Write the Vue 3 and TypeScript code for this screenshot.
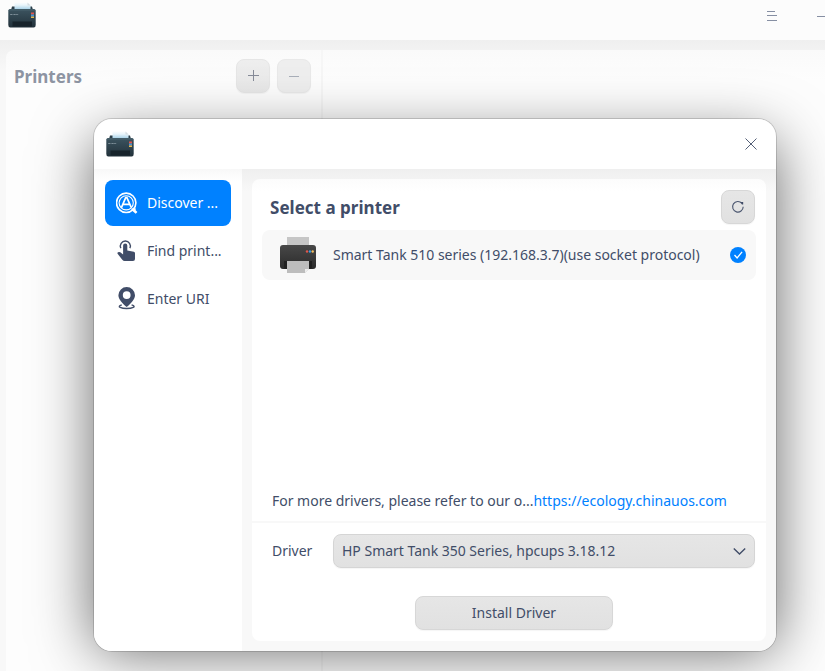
<script setup lang="ts">
import { ref } from 'vue'

interface NavItem { id: string; label: string }

const navItems: NavItem[] = [
  { id: 'discover', label: 'Discover ...' },
  { id: 'find', label: 'Find print...' },
  { id: 'uri', label: 'Enter URI' },
]
const active = ref('discover')
const driver = ref('HP Smart Tank 350 Series, hpcups 3.18.12')
</script>

<template>
  <div class="window">
    <svg width="0" height="0" class="defs">
      <defs>
        <linearGradient id="body" x1="0" y1="0" x2="0" y2="1">
          <stop offset="0" stop-color="#3c5460" /><stop offset="1" stop-color="#22313a" />
        </linearGradient>
        <linearGradient id="paper" x1="0" y1="0" x2="0" y2="1">
          <stop offset="0" stop-color="#fafcfd" /><stop offset="0.35" stop-color="#e9f5fb" /><stop offset="1" stop-color="#9ccbe4" />
        </linearGradient>
        <linearGradient id="device" x1="0" y1="0" x2="0" y2="1">
          <stop offset="0" stop-color="#484848" /><stop offset="1" stop-color="#2b2b2b" />
        </linearGradient>
        <symbol id="app-logo" viewBox="0 0 28 26">
          <path d="M4 4.500h20l1 3.500H3z" fill="#2b3e49" />
          <path d="M6.500 0.500h14l2 2.500V8h-16z" fill="url(#paper)" />
          <path d="M19.500 0.500l3 3h-3z" fill="#d5dce0" />
          <path d="M2 7h24q1.500 0 1.700 1.500V23q0 2.500-2 2.500H2.300q-2 0-2-2.500V8.500Q.5 7 2 7z" fill="url(#body)" />
          <path d="M1 8h26" stroke="#526a76" stroke-width="0.700" />
          <path d="M4.500 19.500h19.500v5h-19.500z" fill="#17232b" />
          <path d="M2.200 12.500h8" stroke="#90a0a9" stroke-width="0.800" stroke-dasharray="2 .4 .8 .3" />
          <path d="M23 10.500h3v2h-3z" fill="#e2544a" />
          <path d="M23 12.500h3v2h-3z" fill="#4595d8" />
          <path d="M23 14.500h3v1.500h-3z" fill="#e8b94d" />
        </symbol>
      </defs>
    </svg>

    <header class="titlebar">
      <svg class="logo" width="28" height="26"><use href="#app-logo" /></svg>
      <svg class="menu-icon" width="10" height="11" viewBox="0 0 10 11"><path d="M0 .5h8M0 4.500h10M0 9.500h10" stroke="#868fa3" /></svg>
      <svg class="minimize-icon" width="8" height="1" viewBox="0 0 8 1"><path d="M0 .5h8" stroke="#868fa3" /></svg>
    </header>

    <main class="workspace">
      <aside class="printers">
        <h1>Printers</h1>
        <button class="square faded" aria-label="Add">
          <svg width="12" height="12" viewBox="0 0 12 12"><path d="M1 5.500h11M6.500 0v11" stroke="#868b98" /></svg>
        </button>
        <button class="square faded disabled" aria-label="Remove">
          <svg width="10" height="2" viewBox="0 0 10 2"><path d="M0 1.500h10" stroke="#a9afb9" /></svg>
        </button>
      </aside>
      <section class="detail"></section>
    </main>

    <div class="dialog" role="dialog">
      <div class="dialog-head">
        <svg class="logo" width="28" height="26"><use href="#app-logo" /></svg>
        <svg width="13" height="12" viewBox="0 0 13 12"><path d="M.5.500l11 11M11.500.5l-11 11" stroke="#414d68" stroke-width="0.900" /></svg>
      </div>
      <div class="dialog-body">
        <nav>
          <a v-for="item in navItems" :key="item.id" :class="{ active: item.id === active }" @click="active = item.id">
            <svg v-if="item.id === 'discover'" width="22" height="22" viewBox="0.5 0 22 22" fill="none" stroke="currentColor">
              <circle cx="10.700" cy="10.800" r="9.700" stroke-width="1.600" />
              <circle cx="10.700" cy="10.800" r="7.100" stroke-width="1.100" />
              <path d="M5.800 15.800L10.200 5.700h1.200l4.300 9.700M7.500 12.300h6.500" stroke-width="1.700" />
              <path d="M16.200 16.200h4v2l1.700 1.700-1.700 1.900-4.400-3.900z" fill="currentColor" stroke="none" />
            </svg>
            <svg v-else-if="item.id === 'find'" width="22" height="22" viewBox="-0.5 0.5 22 22" fill="currentColor">
              <path d="M4.300 8.600A5 5 0 1 1 13.400 8.600" fill="none" stroke="currentColor" stroke-width="1.400" />
              <path d="M6.600 6q0-2 2.100-2t2.100 2v5l6.500 1.200q1.200.3 1.200 1.500V19.500q0 2-2 2H8.200q-1.500 0-2.400-1.300L1.100 14.300Q.5 13.300 1.500 12.700t2.300 0L6.600 15z" />
            </svg>
            <svg v-else width="22" height="24" viewBox="-1 1.200 22 24" fill="currentColor">
              <path fill-rule="evenodd" d="M9.700 1.200a8.300 8.300 0 0 1 8.300 8.200c0 4-4 8-8.300 11.900C5.400 17.400 1.400 13.400 1.400 9.400a8.300 8.300 0 0 1 8.300-8.200zm0 4.200a3.900 3.900 0 1 0 0 7.800 3.900 3.900 0 0 0 0-7.800z" />
              <path d="M4.800 19c-6 2 0 3.700 4.900 3.700s10.900-1.700 4.900-3.700" fill="none" stroke="currentColor" stroke-width="1.400" />
            </svg>
            <span>{{ item.label }}</span>
          </a>
        </nav>
        <div class="content">
          <section class="card">
            <div class="card-head">
              <h2>Select a printer</h2>
              <button class="square" aria-label="Refresh">
                <svg width="14" height="14" viewBox="0 0 14 14"><path d="M10.900 3.300A5.300 5.300 0 1 0 12.200 6.800" fill="none" stroke="#4c5770" stroke-width="1.100" /><path d="M9.600 2h2.600v2.600h-1.300z" fill="#414d68" /></svg>
              </button>
            </div>
            <div class="printer">
              <svg class="device" width="36" height="36" viewBox="0 0 36 36">
                <path d="M7 0h22v9H7z" fill="#c6c6c6" />
                <rect y="8" width="36" height="24" rx="3" fill="url(#device)" />
                <path d="M4 24h28v6q0 2-2 2H6q-2 0-2-2z" fill="#202020" />
                <path d="M7 24h22v8l-4 4H7z" fill="#bdbdbd" /><path d="M25 36v-4h4z" fill="#ededed" />
                <circle cx="27" cy="14.500" r="1.200" fill="#e2554a" /><circle cx="30" cy="14.500" r="1.200" fill="#359ce8" /><circle cx="32.700" cy="14.500" r="1.200" fill="#f5bd5e" />
              </svg>
              <span>Smart Tank 510 series (192.168.3.7)(use socket protocol)</span>
              <svg class="check" width="16" height="16" viewBox="0 0 16 16"><circle cx="8" cy="8" r="8" fill="#0081ff" /><path d="M4.500 8l2.600 2.900 5-6" fill="none" stroke="#fff" stroke-width="1.300" /></svg>
            </div>
            <p class="hint">For more drivers, please refer to our o...<a>https://ecology.chinauos.com</a></p>
            <div class="driver">
              <label>Driver</label>
              <div class="select">
                <span>{{ driver }}</span>
                <svg width="13" height="7" viewBox="0 0 13 7"><path d="M.8.500L6.500 6 12.200.5" fill="none" stroke="#414d68" stroke-width="1.400" /></svg>
              </div>
            </div>
            <button class="install">Install Driver</button>
          </section>
        </div>
      </div>
    </div>
  </div>
</template>

<style>
body { margin: 0; overflow: hidden; }
</style>

<style scoped>
* { box-sizing: border-box; }
.window { position: relative; width: 825px; height: 671px; overflow: hidden; background: #f8f8f8; color: #414d68; font: 14px/20px "Noto Sans", sans-serif; letter-spacing: -0.01px; display: flex; flex-direction: column; }
.defs { position: absolute; }
.logo { display: block; }
.titlebar { height: 40px; flex: none; background: #fcfcfc; display: flex; padding: 2px 0 0 8px; }
.menu-icon { margin: 9px 40px 0 auto; }
.minimize-icon { margin-top: 14px; flex: none; }
.workspace { flex: 1; display: flex; padding: 10px 0 0 6px; background: linear-gradient(#efefef, #f2f2f2 10px, #f8f8f8 30px); }
.printers { width: 317px; background: linear-gradient(#fafafa, #fdfdfd 30px); border-radius: 8px 0 0; border-right: 2px solid #f6f6f6; display: flex; align-items: flex-start; padding: 9px 10px 0 8px; }
.detail { flex: 1; background: linear-gradient(#fafafa, #fdfdfd 30px); }
h1, h2 { margin: 0; font-size: 17px; line-height: 24px; font-weight: 700; letter-spacing: 0.02px; }
h1 { color: #8d94a2; margin: 6px auto 0 0; }
button { font: inherit; color: inherit; padding: 0; }
.square { width: 34px; height: 34px; display: flex; align-items: center; justify-content: center; border: 1px solid #d7d7d7; border-radius: 8px; background: linear-gradient(#e6e6e6, #e1e1e1); box-shadow: 0 1px 1px rgba(0, 0, 0, .04); }
.faded { background: linear-gradient(#eeeeee, #e8e8e8); border-color: #e6e6e6; }
.faded + .faded { margin-left: 7px; }
.disabled { background: #eeeeee; border-color: #e9e9e9; }
.dialog { position: absolute; z-index: 0; left: 94px; top: 119px; width: 682px; height: 532px; border-radius: 18px; background: #fff; display: flex; flex-direction: column; box-shadow: 0 0 0 1px rgba(0, 0, 0, .15); }
.dialog::before { content: ""; position: absolute; z-index: -1; inset: 20px 0 0; border-radius: 18px; box-shadow: 0 0 60px rgba(0, 0, 0, .6); }
.dialog-head { height: 50px; flex: none; background: #fff; border-radius: 18px 18px 0 0; display: flex; align-items: center; justify-content: space-between; padding: 0 18px 0 12px; }
.dialog-body { flex: 1; display: flex; min-height: 0; }
nav { width: 148px; padding: 11px; display: flex; flex-direction: column; gap: 2px; background: linear-gradient(#f8f8f8, #fff 12px); border-radius: 0 0 0 18px; }
nav a { height: 46px; border-radius: 8px; display: flex; align-items: center; padding-left: 11px; gap: 9px; white-space: nowrap; }
nav a.active { background: #0081ff; color: #fff; }
.content { flex: 1; padding: 10px; background: linear-gradient(#efefef, #f3f3f3 10px, #f8f8f8 22px); border-radius: 0 0 18px; }
.card { height: 462px; background: linear-gradient(#fcfcfc, #fff 12px); border-radius: 8px; display: flex; flex-direction: column; }
.card-head { display: flex; justify-content: space-between; padding: 11px 11px 0 18px; }
.card-head h2 { margin-top: 6px; }
.printer { height: 50px; margin: 6px 10px 0; padding: 0 10px 0 18px; border-radius: 8px; background: #f8f8f8; display: flex; align-items: center; }
.printer span { margin-left: 17px; white-space: nowrap; }
.check { margin-left: auto; }
.hint { margin: auto 0 0; padding: 0 20px 10px; border-bottom: 2px solid #f8f8f8; white-space: nowrap; }
.hint a { color: #0081ff; }
.driver { display: flex; align-items: center; padding: 11px 11px 0 20px; }
.driver label { width: 61px; }
.select { flex: 1; height: 34px; display: flex; align-items: center; justify-content: space-between; padding: 0 8px; border: 1px solid #d5d5d5; border-radius: 8px; background: linear-gradient(#e6e6e6, #e1e1e1); box-shadow: 0 1px 1px rgba(0, 0, 0, .04); }
.install { width: 198px; height: 34px; margin: 28px 0 11px 163px; border: 1px solid #d7d7d7; border-radius: 8px; background: linear-gradient(#e6e6e6, #e1e1e1); box-shadow: 0 1px 1px rgba(0, 0, 0, .04); }
</style>
